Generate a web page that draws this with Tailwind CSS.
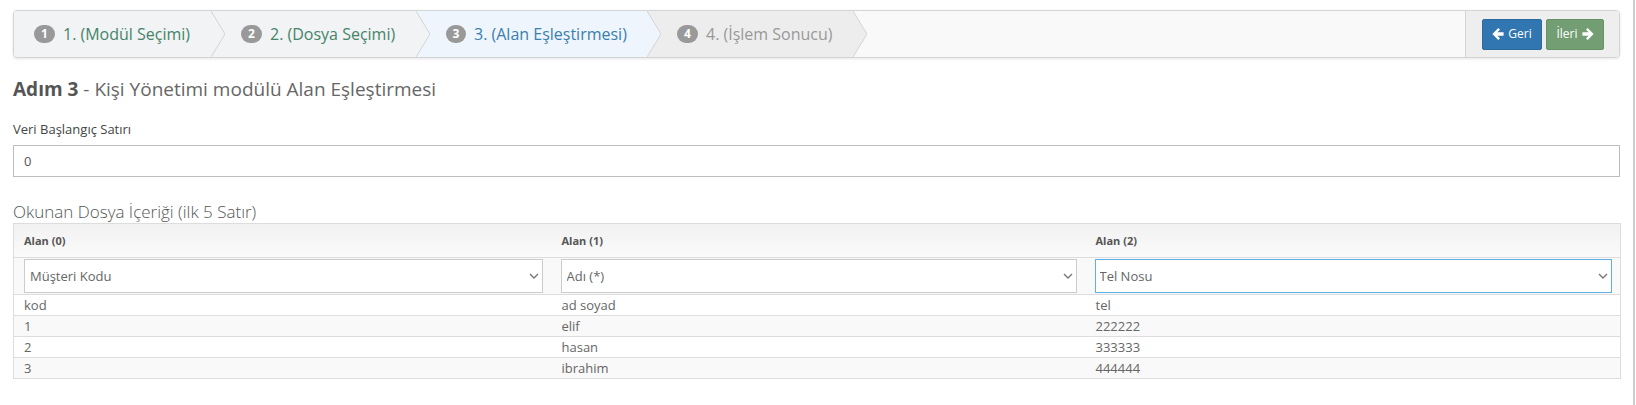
<!DOCTYPE html>
<html lang="tr">

<head>
    <meta charset="UTF-8">
    <title>Adım 3</title>
    <script src="https://cdn.jsdelivr.net/npm/@tailwindcss/browser@4"></script>
</head>

<body class="bg-white font-['Open_Sans',sans-serif] text-[#555] h-[405px] overflow-hidden">
    <div class="border-r-2 border-[#ccc] mr-[1px] h-[405px] pl-[13px] pr-[13px] pt-[10px]">

        <!-- wizard -->
        <div class="flex h-[48px] w-[1607px] bg-[#f9f9f9] border border-[#d4d4d4] rounded-[4px] shadow-[0_1px_3px_rgba(0,0,0,0.1)] overflow-hidden">
            <div class="relative z-40 w-[197px] bg-[#f1f3f5] flex items-center pl-[20px] text-[16px] text-[#468468]">
                <span class="w-[21px] h-[18px] rounded-full bg-[#999] text-white text-[12px] font-bold flex items-center justify-center mr-[8px]">1</span>1. (Modül Seçimi)
                <svg class="absolute left-full top-0 h-full" width="14" height="46" viewBox="0 0 14 46"><path d="M0 0 L14 23 L0 46 Z" fill="#f1f3f5" /><path d="M0 0 L14 23 L0 46" fill="none" stroke="#d4d4d4" /></svg>
            </div>
            <div class="relative z-30 w-[205px] bg-[#f1f3f5] flex items-center pl-[30px] text-[16px] text-[#468468]">
                <span class="w-[21px] h-[18px] rounded-full bg-[#999] text-white text-[12px] font-bold flex items-center justify-center mr-[8px]">2</span>2. (Dosya Seçimi)
                <svg class="absolute left-full top-0 h-full" width="14" height="46" viewBox="0 0 14 46"><path d="M0 0 L14 23 L0 46 Z" fill="#f1f3f5" /><path d="M0 0 L14 23 L0 46" fill="none" stroke="#d4d4d4" /></svg>
            </div>
            <div class="relative z-20 w-[231px] bg-[#eff5fc] flex items-center pl-[30px] text-[16px] text-[#3a80ad]">
                <span class="w-[20px] h-[18px] rounded-full bg-[#999] text-white text-[12px] font-bold flex items-center justify-center mr-[8px]">3</span>3. (Alan Eşleştirmesi)
                <svg class="absolute left-full top-0 h-full" width="14" height="46" viewBox="0 0 14 46"><path d="M0 0 L14 23 L0 46 Z" fill="#eff5fc" /><path d="M0 0 L14 23 L0 46" fill="none" stroke="#d4d4d4" /></svg>
            </div>
            <div class="relative z-10 w-[206px] bg-[#ededed] flex items-center pl-[30px] text-[16px] text-[#999]">
                <span class="w-[21px] h-[18px] rounded-full bg-[#999] text-white text-[12px] font-bold flex items-center justify-center mr-[8px]">4</span>4. (İşlem Sonucu)
                <svg class="absolute left-full top-0 h-full" width="14" height="46" viewBox="0 0 14 46"><path d="M0 0 L14 23 L0 46 Z" fill="#ededed" /><path d="M0 0 L14 23 L0 46" fill="none" stroke="#d4d4d4" /></svg>
            </div>
            <div class="ml-auto w-[154px] bg-[#eee] border-l border-[#d4d4d4] flex items-center pl-[16px] gap-[4px]">
                <button class="h-[31px] w-[60px] flex items-center justify-center gap-[4px] rounded-[2px] bg-[#3276b1] border border-[#2c699d] text-white text-[12px]">
                    <svg width="12" height="12" viewBox="0 0 12 12" fill="#fff"><path d="M6.3 0 L8 1.7 L5.4 4.3 H11.6 V7.7 H5.4 L8 10.3 L6.3 12 L0.4 6 Z" /></svg>Geri
                </button>
                <button class="h-[31px] w-[58px] flex items-center justify-center gap-[4px] rounded-[2px] bg-[#739e73] border border-[#659265] text-white text-[12px]">
                    İleri<svg width="12" height="12" viewBox="0 0 12 12" fill="#fff"><path d="M5.7 0 L4 1.7 L6.6 4.3 H0.4 V7.7 H6.6 L4 10.3 L5.7 12 L11.6 6 Z" /></svg>
                </button>
            </div>
        </div>

        <h3 class="mt-[19px] text-[19px] leading-[25px] text-[#666]"><b class="font-bold text-[#555]">Adım 3</b> - Kişi Yönetimi modülü Alan Eşleştirmesi</h3>

        <label class="block mt-[19px] text-[13px] leading-[17px] text-[#444]">Veri Başlangıç Satırı</label>
        <input class="block mt-[7px] w-[1607px] h-[32px] border border-[#bdbdbd] px-[10px] text-[13px] text-[#555]" value="0">

        <h4 class="mt-[25px] text-[17px] leading-[20px] font-light text-[#555]">Okunan Dosya İçeriği (ilk 5 Satır)</h4>

        <table class="mt-[1px] w-[1607px] table-fixed border-collapse border border-[#ddd] text-[13px] leading-[20px] text-[#666]">
            <colgroup>
                <col class="w-[538px]">
                <col class="w-[534px]">
                <col class="w-[535px]">
            </colgroup>
            <thead>
                <tr class="h-[34px] bg-linear-to-b from-[#f2f2f2] to-[#fafafa] border-b border-[#ddd]">
                    <th class="px-[10px] text-left font-bold text-[11px] text-[#555]">Alan (0)</th>
                    <th class="px-[10px] text-left font-bold text-[11px] text-[#555]">Alan (1)</th>
                    <th class="px-[10px] text-left font-bold text-[11px] text-[#555]">Alan (2)</th>
                </tr>
                <tr class="h-[37px] bg-[#f9f9f9] border-b border-[#ddd]">
                    <th class="pl-[10px] pr-[9px] font-normal">
                        <div class="relative">
                            <select class="block w-full h-[34px] appearance-none bg-white border border-[#ccc] pl-[5px] text-[13px] text-[#666]"><option>Müşteri Kodu</option></select>
                            <svg class="absolute right-[3px] top-[13px]" width="12" height="8" viewBox="0 0 12 8" fill="none" stroke="#777" stroke-width="1.4"><path d="M2 2 L6 6 L10 2" /></svg>
                        </div>
                    </th>
                    <th class="pl-[9px] pr-[9px] font-normal">
                        <div class="relative">
                            <select class="block w-full h-[34px] appearance-none bg-white border border-[#ccc] pl-[5px] text-[13px] text-[#666]"><option>Adı (*)</option></select>
                            <svg class="absolute right-[3px] top-[13px]" width="12" height="8" viewBox="0 0 12 8" fill="none" stroke="#777" stroke-width="1.4"><path d="M2 2 L6 6 L10 2" /></svg>
                        </div>
                    </th>
                    <th class="pl-[9px] pr-[8px] font-normal">
                        <div class="relative">
                            <select class="block w-full h-[34px] appearance-none bg-white border border-[#5fb0e8] pl-[4px] text-[13px] text-[#666]"><option>Tel Nosu</option></select>
                            <svg class="absolute right-[3px] top-[13px]" width="12" height="8" viewBox="0 0 12 8" fill="none" stroke="#777" stroke-width="1.4"><path d="M2 2 L6 6 L10 2" /></svg>
                        </div>
                    </th>
                </tr>
            </thead>
            <tbody>
                <tr class="h-[21px] border-b border-[#ddd] bg-white"><td class="px-[10px]">kod</td><td class="px-[10px]">ad soyad</td><td class="px-[10px]">tel</td></tr>
                <tr class="h-[21px] border-b border-[#ddd] bg-[#f9f9f9]"><td class="px-[10px]">1</td><td class="px-[10px]">elif</td><td class="px-[10px]">222222</td></tr>
                <tr class="h-[21px] border-b border-[#ddd] bg-white"><td class="px-[10px]">2</td><td class="px-[10px]">hasan</td><td class="px-[10px]">333333</td></tr>
                <tr class="h-[21px] border-b border-[#ddd] bg-[#f9f9f9]"><td class="px-[10px]">3</td><td class="px-[10px]">ibrahim</td><td class="px-[10px]">444444</td></tr>
            </tbody>
        </table>
    </div>
</body>

</html>
